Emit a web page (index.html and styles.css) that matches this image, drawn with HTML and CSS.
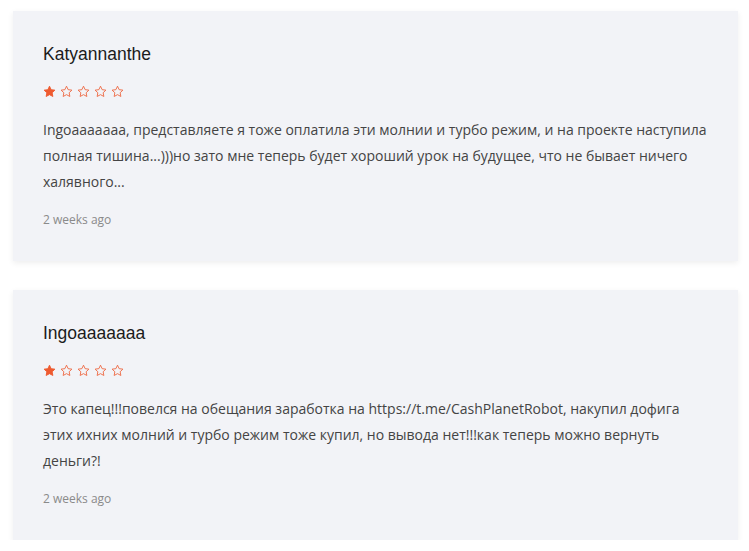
FILE: index.html
```html
<!DOCTYPE html>
<html lang="ru">
<head>
  <meta charset="UTF-8" />
  <meta name="viewport" content="width=device-width, initial-scale=1.0"/>
  <title>Reviews</title>
  <link rel="stylesheet" href="styles.css">
</head>
<body>

  <svg width="0" height="0" class="defs">
    <defs>
      <polygon id="star-shape" points="12,2.2 15,8.6 22,9.5 16.9,14.3 18.2,21.2 12,17.8 5.8,21.2 7.1,14.3 2,9.5 9,8.6"/>
    </defs>
  </svg>

  <div class="reviews">

    <div class="review">
      <h3 class="review-name">Katyannanthe</h3>
      <div class="stars">
        <svg class="star full" viewBox="0 0 24 24"><use href="#star-shape"/></svg>
        <svg class="star" viewBox="0 0 24 24"><use href="#star-shape"/></svg>
        <svg class="star" viewBox="0 0 24 24"><use href="#star-shape"/></svg>
        <svg class="star" viewBox="0 0 24 24"><use href="#star-shape"/></svg>
        <svg class="star" viewBox="0 0 24 24"><use href="#star-shape"/></svg>
      </div>
      <p class="review-text">Ingoaaaaaaa, представляете я тоже оплатила эти молнии и турбо режим, и на проекте наступила полная тишина...)))но зато мне теперь будет хороший урок на будущее, что не бывает ничего халявного...</p>
      <div class="review-date">2 weeks ago</div>
    </div>

    <div class="review">
      <h3 class="review-name">Ingoaaaaaaa</h3>
      <div class="stars">
        <svg class="star full" viewBox="0 0 24 24"><use href="#star-shape"/></svg>
        <svg class="star" viewBox="0 0 24 24"><use href="#star-shape"/></svg>
        <svg class="star" viewBox="0 0 24 24"><use href="#star-shape"/></svg>
        <svg class="star" viewBox="0 0 24 24"><use href="#star-shape"/></svg>
        <svg class="star" viewBox="0 0 24 24"><use href="#star-shape"/></svg>
      </div>
      <p class="review-text">Это капец!!!повелся на обещания заработка на https://t.me/CashPlanetRobot, накупил дофига этих ихних молний и турбо режим тоже купил, но вывода нет!!!как теперь можно вернуть деньги?!</p>
      <div class="review-date">2 weeks ago</div>
    </div>

  </div>

</body>
</html>
```

FILE: styles.css
```css
body {
  font-family: 'Open Sans', sans-serif;
  background-color: #fff;
  margin: 0;
  padding: 0;
}
.defs {
  position: absolute;
}
.reviews {
  width: 725px;
  padding: 11px 0 0 13px;
  display: flex;
  flex-direction: column;
  gap: 29px;
}
.review {
  background-color: #f2f3f7;
  padding: 33px 30px 32px;
  box-shadow: 0 2px 6px rgba(0,0,0,0.07);
}
.review-name {
  font-family: 'Liberation Sans', Arial, sans-serif;
  font-weight: normal;
  font-size: 17.5px;
  line-height: 20px;
  color: #1b1b1b;
  margin: 0;
}
.stars {
  display: flex;
  gap: 4px;
  margin-top: 21px;
  height: 13px;
}
.star {
  width: 13px;
  height: 13px;
  fill: none;
  stroke: #ee6a45;
  stroke-width: 1.7;
  stroke-linejoin: round;
}
.star.full {
  fill: #ee5a30;
  stroke: #ee5a30;
}
.review-text {
  font-size: 14px;
  line-height: 26px;
  color: #444;
  margin: 19px 0 0;
}
.review-date {
  font-size: 12px;
  line-height: 18px;
  color: #8a8a8a;
  margin-top: 16px;
}
```
